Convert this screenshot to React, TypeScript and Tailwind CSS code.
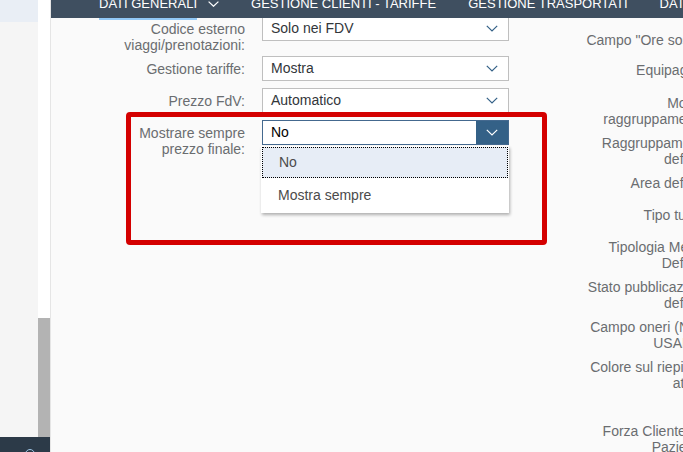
import React from "react";

const font = { fontFamily: '"Liberation Sans", Arial, sans-serif' };

type Row = { lines: string[]; value: string; h: string };

const LEFT_ROWS: Row[] = [
  { lines: ["Codice esterno", "viaggi/prenotazioni:"], value: "Solo nei FDV", h: "h-[40px]" },
  { lines: ["Gestione tariffe:"], value: "Mostra", h: "h-[32px]" },
  { lines: ["Prezzo FdV:"], value: "Automatico", h: "h-[32px]" },
];

const RIGHT_ROWS: { lines: string[]; h: string }[] = [
  { lines: ['Campo "Ore sosta":'], h: "h-[30px]" },
  { lines: ["Equipaggio:"], h: "h-[33px]" },
  { lines: ["Mostra", "raggruppamento:"], h: "h-[40px]" },
  { lines: ["Raggruppamento", "default:"], h: "h-[40px]" },
  { lines: ["Area default:"], h: "h-[32px]" },
  { lines: ["Tipo turno:"], h: "h-[32px]" },
  { lines: ["Tipologia Mezzo", "Default:"], h: "h-[40px]" },
  { lines: ["Stato pubblicazione", "default:"], h: "h-[40px]" },
  { lines: ["Campo oneri (NON", "USARE):"], h: "h-[40px]" },
  { lines: ["Colore sul riepilogo", "attivo:"], h: "h-[64px]" },
  { lines: ["Forza Cliente per", "Paziente:"], h: "h-[40px]" },
];

function Chevron({ color }: { color: string }) {
  return (
    <svg width="12" height="7" viewBox="0 0 12 7" fill="none">
      <path d="M0.8 0.8 L6 6 L11.2 0.8" stroke={color} strokeWidth="1.2" />
    </svg>
  );
}

function Label({ lines }: { lines: string[] }) {
  return (
    <div className="w-[194px] shrink-0 pt-[5px] text-right text-[14px] leading-4 text-[#6a6d70] whitespace-nowrap">
      {lines.map((l, i) => (
        <div key={i}>{l}</div>
      ))}
    </div>
  );
}

function Select({ value }: { value: string }) {
  return (
    <div className="flex h-[25px] w-[247px] shrink-0 items-center border border-[#bfbfbf] bg-white">
      <span className="flex-1 pl-2 text-[14px] text-[#32363a]">{value}</span>
      <span className="flex h-full w-[32px] items-center justify-center">
        <Chevron color="#346187" />
      </span>
    </div>
  );
}

export default function App() {
  return (
    <div className="flex h-[452px] w-[683px] overflow-hidden bg-[#fafafa]" style={font}>
      {/* side panel + scrollbar */}
      <aside className="flex w-[50px] shrink-0 flex-col">
        <div className="flex flex-1">
          <div className="flex w-[38px] flex-col bg-[#f5f5f5]">
            <div className="h-[22px] bg-[#e9eef5]" />
          </div>
          <div className="flex w-[12px] flex-col bg-white">
            <div className="flex-1" />
            <div className="h-[119px] bg-[#b3b3b3]" />
          </div>
        </div>
        <div className="h-[15px] overflow-hidden bg-[#2c3a48]">
          <div className="ml-[25px] mt-[12px] h-[10px] w-[10px] rounded-full border border-[#9fc6e6]" />
        </div>
      </aside>

      <main className="relative flex min-w-0 flex-1 flex-col border-l border-[#e5e5e5] bg-[#fafafa]">
        {/* tab bar */}
        <header className="relative z-10 flex h-[18px] shrink-0 items-start gap-[32px] bg-[#3f4f60] pl-[48px] text-[13px] uppercase leading-[13px] text-white whitespace-nowrap">
          <div className="relative flex items-start">
            <span className="relative -top-[3px]">Dati generali</span>
            <span className="ml-[11px] mt-[1px]">
              <svg width="11" height="6" viewBox="0 0 11 6" fill="none">
                <path d="M0.6 0.6 L5.5 5.3 L10.4 0.6" stroke="#ffffff" strokeWidth="1.2" />
              </svg>
            </span>
            <span className="absolute -bottom-[7px] left-0 h-[2px] w-[98px] bg-[#91c8f6]" />
          </div>
          <span className="relative -top-[3px]">Gestione clienti - tariffe</span>
          <span className="relative -top-[3px]">Gestione trasportati</span>
          <span className="relative -top-[3px]">Dati aggiuntivi</span>
        </header>

        {/* form */}
        <div className="flex-1 overflow-hidden">
          <div className="-mt-[2px] flex">
            <div className="flex shrink-0 flex-col">
              {LEFT_ROWS.map((r) => (
                <div key={r.value} className={`flex items-start gap-[17px] ${r.h}`}>
                  <Label lines={r.lines} />
                  <Select value={r.value} />
                </div>
              ))}
              <div className="flex h-[40px] items-start gap-[17px]">
                <Label lines={["Mostrare sempre", "prezzo finale:"]} />
                <div className="relative">
                  <div className="flex h-[25px] w-[247px] items-center border border-[#44698f] bg-white">
                    <span className="flex-1 pl-2 text-[14px] text-black">No</span>
                    <span className="flex h-full w-[32px] items-center justify-center bg-[#346187]">
                      <Chevron color="#ffffff" />
                    </span>
                  </div>
                  <ul className="absolute left-[-1px] top-[26px] z-20 w-[248px] bg-white py-[1px] text-[14px] text-[#4b4b4b] shadow-[1px_2px_3px_rgba(0,0,0,0.3)]">
                    <li className="mx-[1px] flex h-[31px] items-center border border-dotted border-black bg-[#e7edf6] pl-[16px]">
                      No
                    </li>
                    <li className="flex h-[34px] items-center pl-[17px]">Mostra sempre</li>
                  </ul>
                </div>
              </div>
            </div>

            <div className="flex shrink-0 flex-col pt-[11px]">
              {RIGHT_ROWS.map((r, i) => (
                <div key={i} className={`w-[201px] pt-[5px] text-right text-[14px] leading-4 text-[#6a6d70] whitespace-nowrap ${r.h}`}>
                  {r.lines.map((l, j) => (
                    <div key={j}>{l}</div>
                  ))}
                </div>
              ))}
            </div>
          </div>
        </div>

        {/* annotation box */}
        <div className="pointer-events-none absolute left-[75px] top-[112px] z-30 h-[133px] w-[421px] rounded-[4px] border-[5px] border-[#d40000]" />
      </main>
    </div>
  );
}
